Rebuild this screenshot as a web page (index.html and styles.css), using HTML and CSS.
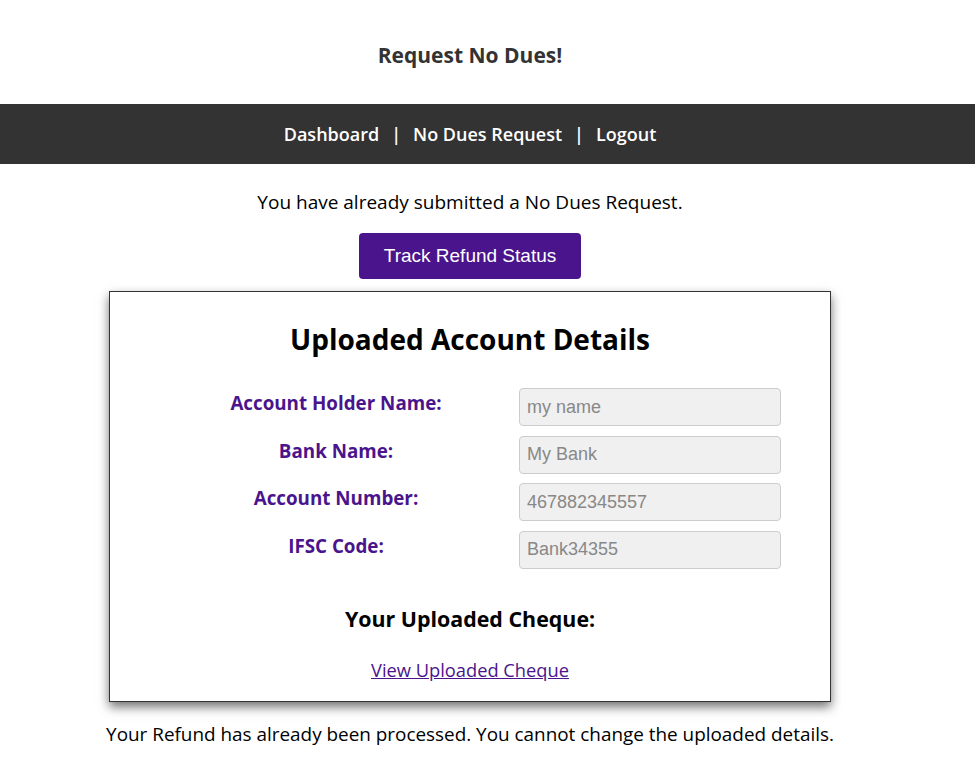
FILE: index.html
```html
<!DOCTYPE html>
<html lang="en">
<head>
<meta charset="utf-8">
<title>Request No Dues!</title>
<link rel="stylesheet" href="styles.css">
</head>
<body>
<header class="site-header">
  <h1 class="site-title">Request No Dues!</h1>
</header>
<nav class="topnav">
  <div class="topnav-inner">
    <a href="#" class="nav-link">Dashboard</a>
    <span class="nav-sep">|</span>
    <a href="#" class="nav-link">No Dues Request</a>
    <span class="nav-sep">|</span>
    <a href="#" class="nav-link">Logout</a>
  </div>
</nav>
<main class="content">
  <p class="notice">You have already submitted a No Dues Request.</p>
  <button class="track-btn" type="button">Track Refund Status</button>
  <section class="card">
    <h2 class="card-title">Uploaded Account Details</h2>
    <div class="details">
      <label class="field-label">Account Holder Name:</label>
      <input class="field-input" type="text" value="my name" readonly>
      <label class="field-label">Bank Name:</label>
      <input class="field-input" type="text" value="My Bank" readonly>
      <label class="field-label">Account Number:</label>
      <input class="field-input" type="text" value="467882345557" readonly>
      <label class="field-label">IFSC Code:</label>
      <input class="field-input" type="text" value="Bank34355" readonly>
    </div>
    <h3 class="cheque-title">Your Uploaded Cheque:</h3>
    <a href="#" class="cheque-link">View Uploaded Cheque</a>
  </section>
  <p class="footer-note">Your Refund has already been processed. You cannot change the uploaded details.</p>
</main>
</body>
</html>
```

FILE: styles.css
```css
* {
  box-sizing: border-box;
}

body {
  margin: 0;
  font-family: "Comic Sans MS", "Open Sans", sans-serif;
  color: #000;
  background: #fff;
}

.site-header {
  width: 940px;
  padding: 40px 0 34px;
  text-align: center;
}

.site-title {
  margin: 0;
  font-size: 21px;
  line-height: 30px;
  font-weight: 700;
  color: #333;
}

.topnav {
  background: #333;
  height: 60px;
}

.topnav-inner {
  width: 940px;
  height: 60px;
  display: flex;
  align-items: center;
  justify-content: center;
  gap: 12px;
  font-size: 18px;
  font-weight: 600;
}

.nav-link,
.nav-sep {
  color: #fff;
  text-decoration: none;
}

.content {
  width: 940px;
  display: flex;
  flex-direction: column;
  align-items: center;
}

.notice {
  margin: 26px 0 0;
  font-size: 19px;
  line-height: 24px;
}

.track-btn {
  margin-top: 19px;
  width: 222px;
  height: 46px;
  border: none;
  border-radius: 4px;
  background: #4a148c;
  color: #fff;
  font-family: "Liberation Sans", Arial, sans-serif;
  font-size: 19px;
}

.card {
  margin-top: 12px;
  width: 722px;
  border: 1px solid #333;
  background: #fff;
  box-shadow: 0 5px 10px rgba(0, 0, 0, 0.55);
  display: flex;
  flex-direction: column;
  align-items: center;
  padding: 0 20px 19px;
}

.card-title {
  margin: 30px 0 0;
  font-size: 28px;
  line-height: 34px;
  font-weight: 700;
}

.details {
  margin-top: 32px;
  display: grid;
  grid-template-columns: 354px 262px;
  column-gap: 6px;
  row-gap: 9.5px;
}

.field-label {
  text-align: center;
  font-size: 18.8px;
  line-height: 30px;
  font-weight: 700;
  color: #4a148c;
}

.field-input {
  height: 38px;
  width: 262px;
  border: 1px solid #ccc;
  border-radius: 4px;
  background: #f0f0f0;
  color: #888;
  font-family: "Liberation Sans", Arial, sans-serif;
  font-size: 18px;
  padding: 0 7px;
}

.cheque-title {
  margin: 35px 0 0;
  font-size: 21.4px;
  line-height: 30px;
  font-weight: 700;
}

.cheque-link {
  margin-top: 24px;
  font-size: 18.3px;
  line-height: 24px;
  color: #4a148c;
}

.footer-note {
  margin: 20px 0 0;
  font-size: 18.9px;
  line-height: 24px;
}
```
